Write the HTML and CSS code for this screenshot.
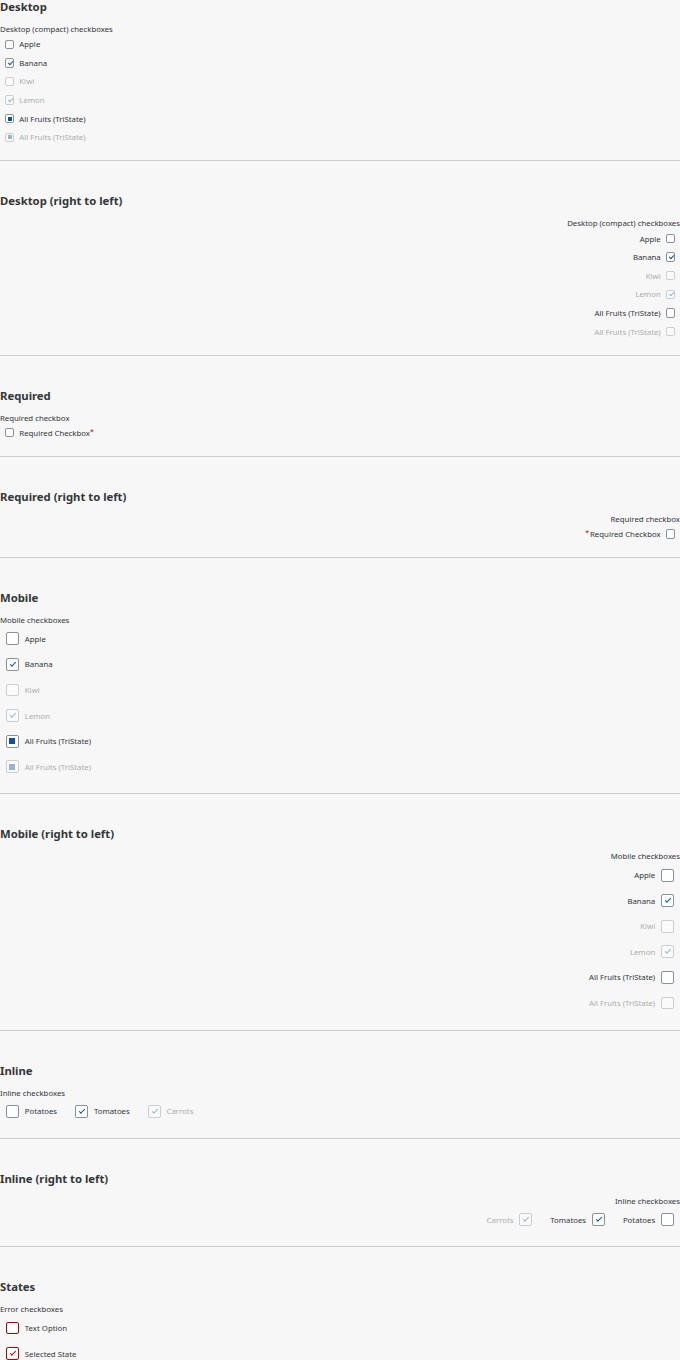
FILE: index.html
```html
<!DOCTYPE html>
<html>
<head>
  <meta charset="UTF-8">
  <meta name="viewport" content="width=device-width, initial-scale=1">
  <title>Checkbox</title>
  <link rel="stylesheet" href="styles.css">
</head>

<body>
  <!-- Desktop -->
  <section class="demo">
    <h2>Desktop</h2>
    <fieldset class="group">
      <legend>Desktop (compact) checkboxes</legend>
      <label class="cb"><span class="box"></span><span class="text">Apple</span></label>
      <label class="cb"><span class="box checked"></span><span class="text">Banana</span></label>
      <label class="cb disabled"><span class="box"></span><span class="text">Kiwi</span></label>
      <label class="cb disabled"><span class="box checked"></span><span class="text">Lemon</span></label>
      <label class="cb"><span class="box tri"></span><span class="text">All Fruits (TriState)</span></label>
      <label class="cb disabled"><span class="box tri"></span><span class="text">All Fruits (TriState)</span></label>
    </fieldset>
  </section>

  <section class="demo">
    <h2>Desktop (right to left)</h2>
    <fieldset class="group" dir="rtl">
      <legend>Desktop (compact) checkboxes</legend>
      <label class="cb"><span class="box"></span><span class="text">Apple</span></label>
      <label class="cb"><span class="box checked"></span><span class="text">Banana</span></label>
      <label class="cb disabled"><span class="box"></span><span class="text">Kiwi</span></label>
      <label class="cb disabled"><span class="box checked"></span><span class="text">Lemon</span></label>
      <label class="cb"><span class="box"></span><span class="text">All Fruits (TriState)</span></label>
      <label class="cb disabled"><span class="box"></span><span class="text">All Fruits (TriState)</span></label>
    </fieldset>
  </section>

  <!-- Required -->
  <section class="demo">
    <h2>Required</h2>
    <fieldset class="group">
      <legend>Required checkbox</legend>
      <label class="cb"><span class="box"></span><span class="text">Required Checkbox</span><span class="req">*</span></label>
    </fieldset>
  </section>

  <section class="demo">
    <h2>Required (right to left)</h2>
    <fieldset class="group" dir="rtl">
      <legend>Required checkbox</legend>
      <label class="cb"><span class="box"></span><span class="text">Required Checkbox</span><span class="req">*</span></label>
    </fieldset>
  </section>

  <!-- Mobile -->
  <section class="demo">
    <h2>Mobile</h2>
    <fieldset class="group cozy">
      <legend>Mobile checkboxes</legend>
      <label class="cb"><span class="box"></span><span class="text">Apple</span></label>
      <label class="cb"><span class="box checked"></span><span class="text">Banana</span></label>
      <label class="cb disabled"><span class="box"></span><span class="text">Kiwi</span></label>
      <label class="cb disabled"><span class="box checked"></span><span class="text">Lemon</span></label>
      <label class="cb"><span class="box tri"></span><span class="text">All Fruits (TriState)</span></label>
      <label class="cb disabled"><span class="box tri"></span><span class="text">All Fruits (TriState)</span></label>
    </fieldset>
  </section>

  <section class="demo">
    <h2>Mobile (right to left)</h2>
    <fieldset class="group cozy" dir="rtl">
      <legend>Mobile checkboxes</legend>
      <label class="cb"><span class="box"></span><span class="text">Apple</span></label>
      <label class="cb"><span class="box checked"></span><span class="text">Banana</span></label>
      <label class="cb disabled"><span class="box"></span><span class="text">Kiwi</span></label>
      <label class="cb disabled"><span class="box checked"></span><span class="text">Lemon</span></label>
      <label class="cb"><span class="box"></span><span class="text">All Fruits (TriState)</span></label>
      <label class="cb disabled"><span class="box"></span><span class="text">All Fruits (TriState)</span></label>
    </fieldset>
  </section>

  <!-- Inline -->
  <section class="demo">
    <h2>Inline</h2>
    <fieldset class="group cozy inline">
      <legend>Inline checkboxes</legend>
      <div class="row">
        <label class="cb"><span class="box"></span><span class="text">Potatoes</span></label>
        <label class="cb"><span class="box checked"></span><span class="text">Tomatoes</span></label>
        <label class="cb disabled"><span class="box checked"></span><span class="text">Carrots</span></label>
      </div>
    </fieldset>
  </section>

  <section class="demo">
    <h2>Inline (right to left)</h2>
    <fieldset class="group cozy inline" dir="rtl">
      <legend>Inline checkboxes</legend>
      <div class="row">
        <label class="cb"><span class="box"></span><span class="text">Potatoes</span></label>
        <label class="cb"><span class="box checked"></span><span class="text">Tomatoes</span></label>
        <label class="cb disabled"><span class="box checked"></span><span class="text">Carrots</span></label>
      </div>
    </fieldset>
  </section>

  <!-- States -->
  <section class="demo">
    <h2>States</h2>
    <fieldset class="group cozy">
      <legend>Error checkboxes</legend>
      <label class="cb error"><span class="box"></span><span class="text">Text Option</span></label>
      <label class="cb error"><span class="box checked"></span><span class="text">Selected State</span></label>
      <label class="cb error disabled"><span class="box"></span><span class="text">Disabled State</span></label>
    </fieldset>
  </section>
</body>

</html>
```

FILE: styles.css
```css
body {
  margin: 0;
  background: #f7f7f7;
  color: #32363a;
  font-family: "Noto Sans", Arial, sans-serif;
  font-size: 7.8px;
}
.demo {
  padding: 33px 0 13.7px;
  border-bottom: 1px solid #cdcdcd;
}
.demo:first-child {
  padding-top: 0;
}
h2 {
  margin: 0;
  font-size: 11.3px;
  line-height: 14px;
  font-weight: bold;
}
.group {
  border: none;
  margin: 10px 0 0;
  padding: 0;
  min-width: 0;
}
legend {
  padding: 0;
  line-height: 11px;
  float: left;
  width: 100%;
}
.group > .cb,
.group > .row {
  clear: both;
}
.cb {
  display: flex;
  align-items: center;
  height: 18.6px;
  padding: 0 5px;
  gap: 5px;
}
.cb .text {
  unicode-bidi: plaintext;
  white-space: nowrap;
}
.box {
  position: relative;
  box-sizing: border-box;
  width: 9.3px;
  height: 9.3px;
  flex: none;
  border: 1px solid #89919a;
  border-radius: 2px;
  background: #fff;
}
.box.checked::after {
  content: "";
  position: absolute;
  left: 1.8px;
  top: 1.6px;
  width: 4px;
  height: 1.8px;
  border-left: 1px solid #0854a0;
  border-bottom: 1px solid #0854a0;
  transform: rotate(-45deg);
}
.box.tri::after {
  content: "";
  position: absolute;
  left: 1.6px;
  top: 1.6px;
  width: 4.2px;
  height: 4.2px;
  background: #0854a0;
}
.req {
  color: #bb0000;
  align-self: flex-start;
  margin-top: 3px;
  margin-left: -5px;
  font-size: 7px;
}
[dir="rtl"] .req {
  margin-left: 0;
  margin-right: -4px;
}
.disabled {
  opacity: 0.4;
}

/* mobile size */
.cozy .cb {
  height: 25.6px;
  padding: 0 6px;
  gap: 6px;
}
.cozy .box {
  width: 12.8px;
  height: 12.8px;
}
.cozy .box.checked::after {
  left: 3px;
  top: 2.8px;
  width: 5px;
  height: 2.2px;
}
.cozy .box.tri::after {
  left: 2.4px;
  top: 2.4px;
  width: 6px;
  height: 6px;
}

/* inline */
.row {
  display: flex;
  gap: 6px;
}

/* error state */
.error .box {
  border: 1.5px solid #bb0000;
}
.error .box.checked::after {
  border-color: #bb0000;
}
```
